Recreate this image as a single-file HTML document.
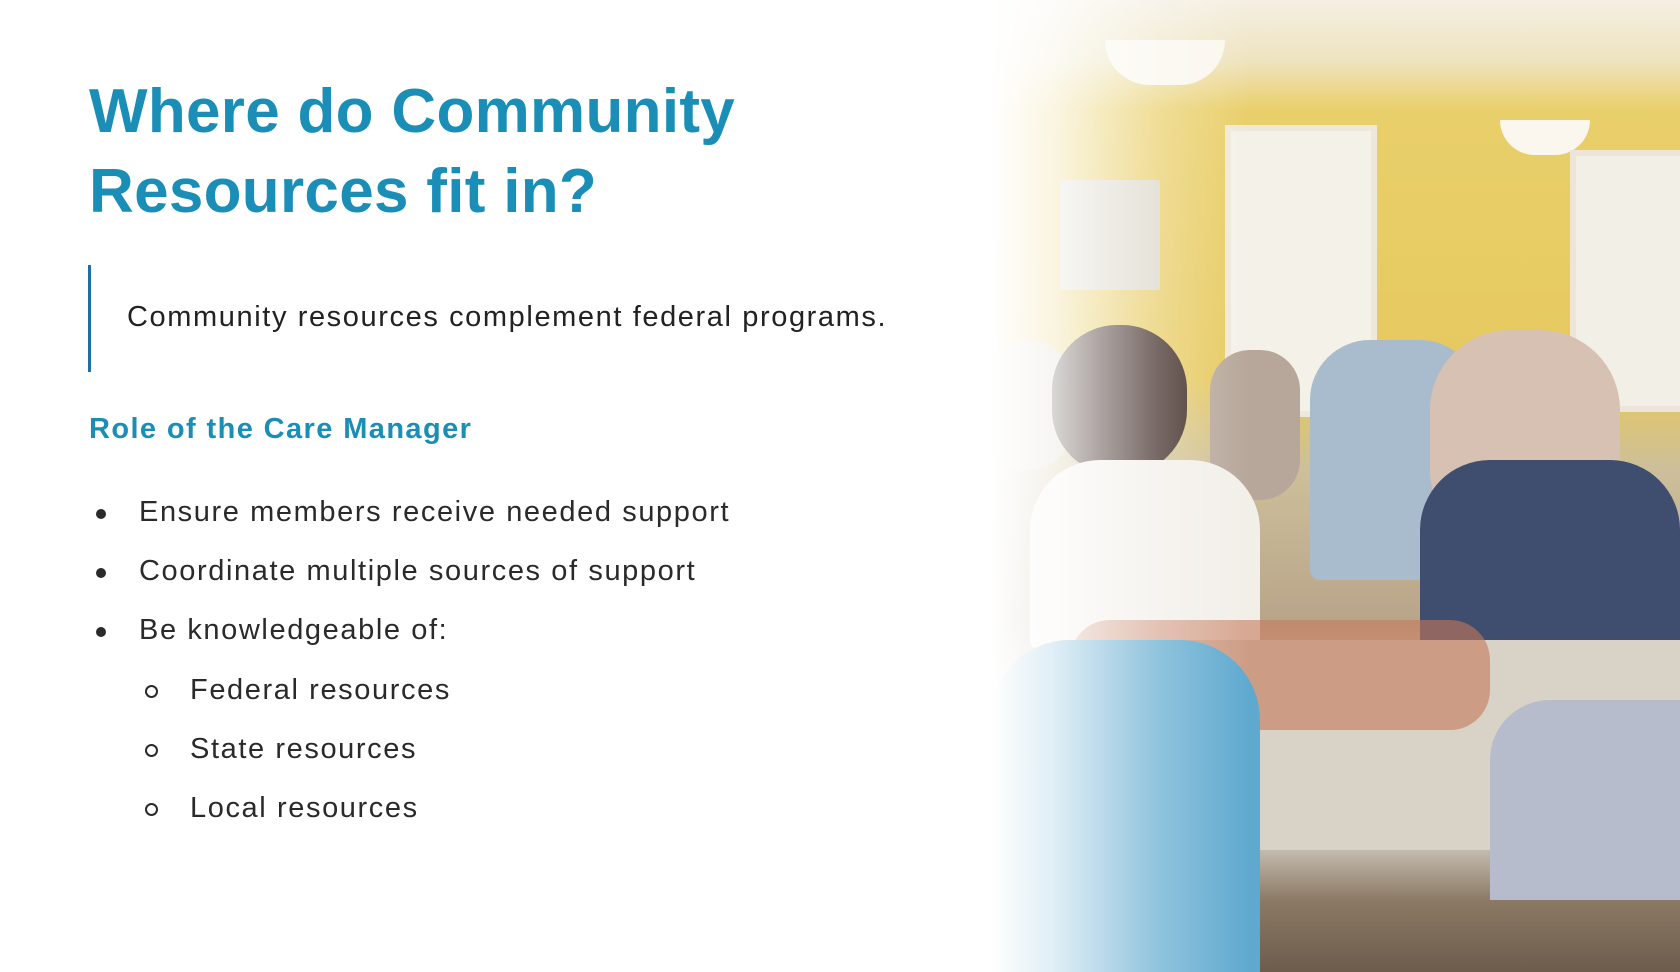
<!DOCTYPE html>
<html><head><meta charset="utf-8"><style>
html,body{margin:0;padding:0}
body{width:1680px;height:972px;position:relative;overflow:hidden;background:#fff;font-family:"Liberation Sans",sans-serif;}
.photo{position:absolute;left:990px;top:0;width:690px;height:972px;overflow:hidden;
background:linear-gradient(180deg,#f4efe2 0,#efe4c0 60px,#e9cf6a 110px,#e6c95f 380px,#cdbf9a 470px,#b9a58a 620px,#d8d0c4 700px,#cfc8bd 840px,#8c7a66 900px,#6d5c4c 972px);}
.photo div{position:absolute}
.fade{position:absolute;left:990px;top:0;width:260px;height:972px;background:linear-gradient(90deg,#fff 0,rgba(255,255,255,.8) 25%,rgba(255,255,255,.3) 65%,rgba(255,255,255,0) 100%)}
h1{position:absolute;left:89px;top:72px;margin:0;font-size:62px;line-height:80px;color:#1a8eb6;font-weight:bold;letter-spacing:0.3px}
.bar{position:absolute;left:88px;top:265px;width:3px;height:107px;background:#1d6fa6}
.quote{position:absolute;left:127px;top:301px;font-size:29px;color:#222;letter-spacing:1.6px}
h2{position:absolute;left:89px;top:413px;margin:0;font-size:29px;color:#1a8eb6;font-weight:bold;letter-spacing:1.4px}
.li{position:absolute;font-size:29px;color:#2a2a2a;line-height:34px;letter-spacing:1.6px}
.dot{position:absolute;width:10px;height:10px;border-radius:50%;background:#2a2a2a}
.circ{position:absolute;width:9px;height:9px;border-radius:50%;border:2px solid #2a2a2a}
</style></head><body>
<div class="photo">
 <div style="left:115px;top:40px;width:120px;height:45px;border-radius:0 0 60px 60px;background:#fbf7ee"></div>
 <div style="left:510px;top:120px;width:90px;height:35px;border-radius:0 0 45px 45px;background:#fbf7ee"></div>
 <div style="left:235px;top:125px;width:140px;height:280px;background:#f3f1e8;border:6px solid #eee8da"></div>
 <div style="left:580px;top:150px;width:110px;height:250px;background:#f1efe6;border:6px solid #ede6d8"></div>
 <div style="left:70px;top:180px;width:100px;height:110px;background:#d9d6c8"></div>
 <div style="left:0;top:340px;width:80px;height:130px;border-radius:40px;background:#d8d0c2"></div>
 <div style="left:220px;top:350px;width:90px;height:150px;border-radius:40px;background:#b7a79a"></div>
 <div style="left:320px;top:340px;width:170px;height:240px;border-radius:60px 60px 10px 10px;background:#a9bccd"></div>
 <div style="left:62px;top:325px;width:135px;height:150px;border-radius:65px;background:#3a2620"></div>
 <div style="left:40px;top:460px;width:230px;height:190px;border-radius:70px 70px 10px 10px;background:#f2efe9"></div>
 <div style="left:440px;top:330px;width:190px;height:220px;border-radius:80px;background:#d7c1b2"></div>
 <div style="left:430px;top:460px;width:260px;height:200px;border-radius:70px 70px 10px 10px;background:#3f4d6e"></div>
 <div style="left:70px;top:640px;width:620px;height:210px;background:#d9d2c6"></div>
 <div style="left:80px;top:620px;width:420px;height:110px;border-radius:40px;background:#c4785a;opacity:.6"></div>
 <div style="left:0;top:640px;width:270px;height:332px;border-radius:80px 80px 0 0;background:#5fa9cf"></div>
 <div style="left:500px;top:700px;width:190px;height:200px;border-radius:60px 0 0 0;background:#b6bccb"></div>
</div>
<div class="fade"></div>
<h1>Where do Community<br>Resources fit in?</h1>
<div class="bar"></div>
<div class="quote">Community resources complement federal programs.</div>
<h2>Role of the Care Manager</h2>
<div class="dot" style="left:96px;top:509px"></div><div class="li" style="left:139px;top:495px">Ensure members receive needed support</div>
<div class="dot" style="left:96px;top:568px"></div><div class="li" style="left:139px;top:554px">Coordinate multiple sources of support</div>
<div class="dot" style="left:96px;top:627px"></div><div class="li" style="left:139px;top:613px">Be knowledgeable of:</div>
<div class="circ" style="left:145px;top:685px"></div><div class="li" style="left:190px;top:673px">Federal resources</div>
<div class="circ" style="left:145px;top:744px"></div><div class="li" style="left:190px;top:732px">State resources</div>
<div class="circ" style="left:145px;top:803px"></div><div class="li" style="left:190px;top:791px">Local resources</div>
</body></html>
